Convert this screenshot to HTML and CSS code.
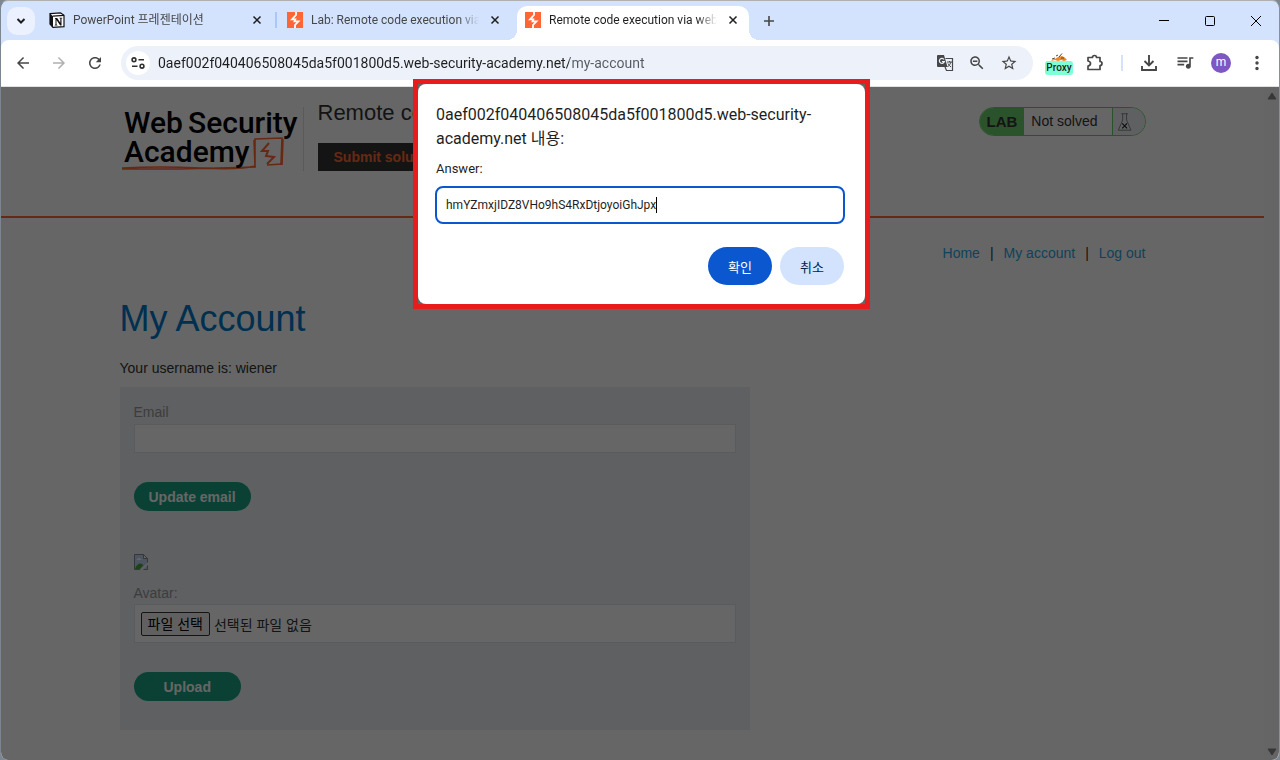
FILE: index.html
```html
<!DOCTYPE html>
<html lang="ko">
<head>
<meta charset="UTF-8">
<meta name="viewport" content="width=device-width, initial-scale=1.0">
<title>Remote code execution via web shell upload</title>
<link rel="stylesheet" href="styles.css">
</head>
<body>
<svg class="defs" aria-hidden="true">
  <symbol id="bolt" viewBox="0 0 16 16">
    <rect width="16" height="16" fill="#ff6633"/>
    <path d="M9 0V3L5 7.300H8.300L7.500 9.300H11.500L8 13V16" fill="none" stroke="#fff" stroke-width="1.800"/>
  </symbol>
  <symbol id="close" viewBox="0 0 10 10">
    <path d="M1.500 1.500L8.500 8.500M8.500 1.500L1.500 8.500" fill="none" stroke="currentColor" stroke-width="1.500"/>
  </symbol>
</svg>

<div class="window">
  <header class="tabstrip">
    <button class="tab-search" aria-label="탭 검색">
      <svg width="10" height="8" viewBox="0 0 10 8"><path d="M1.500 2L5 5.500 8.500 2" fill="none" stroke="#1f1f1f" stroke-width="2"/></svg>
    </button>
    <nav class="tabs">
      <div class="tab">
        <svg width="16" height="16" viewBox="0 0 16 16">
          <path d="M1 1.600L11.500 .8 15 3.300V14.600L4 15.400 1 12Z" fill="#fff" stroke="#111" stroke-width="1.200"/>
          <path d="M1 1.600L4 4.200V15.400L1 12Z" fill="#111"/>
          <path d="M4 4.200L15 3.300" stroke="#111" stroke-width="1.200"/>
          <path d="M6 6H8.200L11.300 10.800V6.600L10.400 6.300V5.700H13.300V6.300L12.500 6.600V13.400H11.200L7.500 8V12.600L8.400 12.900V13.500H5.700V12.900L6.500 12.600V6.900L6 6.600Z" fill="#111"/>
        </svg>
        <a href="#">PowerPoint 프레젠테이션</a>
        <button aria-label="닫기"><svg width="10" height="10"><use href="#close"/></svg></button>
      </div>
      <div class="tab">
        <svg width="16" height="16"><use href="#bolt"/></svg>
        <a href="#">Lab: Remote code execution via web shell upload</a>
        <button aria-label="닫기"><svg width="10" height="10"><use href="#close"/></svg></button>
      </div>
      <div class="tab active">
        <svg width="16" height="16"><use href="#bolt"/></svg>
        <a href="#">Remote code execution via web shell upload</a>
        <button aria-label="닫기"><svg width="10" height="10"><use href="#close"/></svg></button>
      </div>
    </nav>
    <button class="new-tab" aria-label="새 탭">
      <svg width="12" height="12" viewBox="0 0 12 12"><path d="M6 1V11M1 6H11" stroke="#474747" stroke-width="1.600"/></svg>
    </button>
    <div class="window-controls">
      <button aria-label="최소화"><svg width="12" height="12" viewBox="0 0 12 12"><path d="M1 5.500H11" stroke="#000"/></svg></button>
      <button aria-label="최대화"><svg width="12" height="12" viewBox="0 0 12 12"><rect x="1.500" y="1.500" width="9" height="9" rx="1" fill="none" stroke="#000"/></svg></button>
      <button aria-label="창 닫기"><svg width="12" height="12" viewBox="0 0 12 12"><path d="M1 1L11 11M11 1L1 11" stroke="#000"/></svg></button>
    </div>
  </header>

  <div class="toolbar">
    <button aria-label="뒤로"><svg width="18" height="18" viewBox="0 0 24 24"><path d="M20 11H7.830l5.590-5.590L12 4l-8 8 8 8 1.410-1.410L7.830 13H20v-2z"/></svg></button>
    <button class="disabled" aria-label="앞으로"><svg width="18" height="18" viewBox="0 0 24 24"><path d="M4 11h12.170l-5.590-5.590L12 4l8 8-8 8-1.410-1.410L16.170 13H4v-2z"/></svg></button>
    <button aria-label="새로고침"><svg width="18" height="18" viewBox="0 0 24 24"><path d="M17.650 6.350C16.200 4.900 14.210 4 12 4c-4.420 0-7.990 3.580-7.990 8s3.570 8 7.990 8c3.730 0 6.840-2.550 7.730-6h-2.080c-.82 2.330-3.040 4-5.650 4-3.310 0-6-2.690-6-6s2.690-6 6-6c1.660 0 3.140.69 4.220 1.780L13 11h7V4l-2.350 2.350z"/></svg></button>
    <div class="omnibox">
      <button class="site-info" aria-label="사이트 정보 보기">
        <svg width="14" height="12" viewBox="0 0 14 12" fill="none" stroke="#303030" stroke-width="1.600">
          <circle cx="3" cy="2.800" r="1.900"/><path d="M7.500 2.800H13M1 9.200H6.500"/><circle cx="11" cy="9.200" r="1.900"/>
        </svg>
      </button>
      <input type="text" aria-label="주소창" value="0aef002f040406508045da5f001800d5.web-security-academy.net/my-account" spellcheck="false">
      <button aria-label="번역">
        <svg width="18" height="18" viewBox="0 0 18 18">
          <path d="M2 1H8L11.500 13H2Q1 13 1 12V2Q1 1 2 1Z"/>
          <path d="M9.500 4.500H16.500V16.500H10.500L9 13" fill="none" stroke="#474747" stroke-width="1.200"/>
          <path d="M8 5.500A2.500 2.500 0 1 0 8.300 7.500H6" fill="none" stroke="#edf1fa" stroke-width="1.200"/>
          <path d="M11 8H16M13.500 7V8M15 8Q14 11 11.500 13M12 9.500Q13.500 12 15 13" fill="none" stroke="#474747"/>
        </svg>
      </button>
      <button aria-label="확대/축소"><svg width="18" height="18" viewBox="0 0 24 24"><path d="M15.500 14h-.79l-.28-.27C15.410 12.590 16 11.110 16 9.500 16 5.910 13.090 3 9.500 3S3 5.910 3 9.500 5.910 16 9.500 16c1.610 0 3.090-.59 4.230-1.570l.27.28v.79l5 4.990L20.490 19l-4.990-5zm-6 0C7.010 14 5 11.990 5 9.500S7.010 5 9.500 5 14 7.010 14 9.500 11.990 14 9.500 14zM6.500 8.500h6v2h-6z"/></svg></button>
      <button aria-label="북마크 추가"><svg width="18" height="18" viewBox="0 0 24 24"><path d="M22 9.240l-7.190-.62L12 2 9.190 8.630 2 9.240l5.460 4.730L5.820 21 12 17.270 18.180 21l-1.630-7.030L22 9.240zM12 15.400l-3.760 2.270 1-4.280-3.320-2.880 4.380-.38L12 6.100l1.710 4.040 4.380.38-3.320 2.880 1 4.280L12 15.400z"/></svg></button>
    </div>
    <button class="proxy" aria-label="Proxy">
      <svg width="18" height="8" viewBox="0 0 18 8">
        <path d="M1 8Q2 6 5 6L8 4 12 3Q15 4 17 7L14 8 11 7 8 8 5 7Z" fill="#e8892b"/>
        <path d="M6 3L8 2M9 4L12 .5M2 6L5 5M11 5L14 5" stroke="#5b4a36"/>
      </svg>
      <span>Proxy</span>
    </button>
    <button aria-label="확장 프로그램">
      <svg width="18" height="18" viewBox="0 0 18 18"><path d="M2 3.500H6.500A2 2 0 0 1 10.500 3.500H14V7.500A2 2 0 0 1 14 11.500V15.500H2V12Q4.500 11.500 4.500 9.500T2 7Z" fill="none" stroke="#474747" stroke-width="1.700" stroke-linejoin="round"/></svg>
    </button>
    <span class="divider"></span>
    <button aria-label="다운로드"><svg width="18" height="18" viewBox="0 0 18 18"><path d="M9 1V11M4.500 7L9 11.500 13.500 7M2 12V16H16V12" fill="none" stroke="#474747" stroke-width="1.900"/></svg></button>
    <button aria-label="미디어 제어"><svg width="20" height="20" viewBox="0 0 24 24"><path d="M15 5H3v2h12V5zm0 4H3v2h12V9zM3 15h8v-2H3v2zM17 5v8.180c-.31-.11-.65-.18-1-.18-1.660 0-3 1.340-3 3s1.340 3 3 3 3-1.340 3-3V7h3V5h-5z"/></svg></button>
    <button aria-label="프로필"><span class="profile">m</span></button>
    <button aria-label="메뉴"><svg width="16" height="16" viewBox="0 0 16 16"><circle cx="8" cy="2.500" r="1.700"/><circle cx="8" cy="8" r="1.700"/><circle cx="8" cy="13.500" r="1.700"/></svg></button>
  </div>

  <div class="viewport">
    <main class="page">
      <div class="lab-header">
        <div class="container">
          <a class="logo" href="#" aria-label="Web Security Academy">
            <svg width="183" height="70" viewBox="0 0 183 70">
              <path d="M2 64Q40 62 80 64T135 62V35L162 34 161 60 147 61M135 62L134 36M2 65L60 65 136 63M163 35L162 61" fill="none" stroke="#ff6633" stroke-width="1.600"/>
              <path d="M149 39L142 47H148L146 52 154 53 147 60" fill="none" stroke="#ff6633" stroke-width="2"/>
              <text x="4" y="29">Web</text>
              <text x="68" y="29">Security</text>
              <text x="4" y="58">Academy</text>
            </svg>
          </a>
          <div class="lab-title">
            <h2>Remote code execution via web shell upload</h2>
            <button class="submit-solution">Submit solution</button>
          </div>
          <div class="lab-status">
            <strong>LAB</strong>
            <span>Not solved</span>
            <svg width="33" height="27" viewBox="0 0 33 27">
              <path d="M8.500 5.500H15.500M10 5.500V12L5.500 22.500H18.500L14 12V5.500" fill="none" stroke="#888"/>
              <path d="M9.500 15.500L14.500 20.500M14.500 15.500L9.500 20.500" stroke="#222" stroke-width="1.200"/>
            </svg>
          </div>
        </div>
      </div>

      <div class="container account">
        <nav class="account-links">
          <a href="#">Home</a><span>|</span><a href="#">My account</a><span>|</span><a href="#">Log out</a>
        </nav>
        <h1>My Account</h1>
        <p>Your username is: wiener</p>
        <div class="forms">
          <form>
            <label for="email">Email</label>
            <input type="email" id="email">
            <button type="button">Update email</button>
          </form>
          <form>
            <svg class="avatar" width="14" height="16" viewBox="0 0 14 16">
              <path d="M.5 .5H9.500L13.500 4.500V15.500H.5Z" fill="#c3d4f5" stroke="#8a8a8a"/>
              <path d="M9.500 .5V4.500H13.500Z" fill="#fff" stroke="#8a8a8a"/>
              <path d="M2.500 6Q2.500 4.500 4 4.500 5.500 3 6.500 5 7.500 5 7.500 6Z" fill="#fff"/>
              <path d="M1 15Q3 9 7 9.500L9.500 11 6 15Z" fill="#4ba83a"/>
              <path d="M5.500 16L14 8V11L9 16Z" fill="#ebeff2"/>
            </svg>
            <label for="avatar">Avatar:</label>
            <div class="file-field">
              <input type="file" id="avatar">
              <label class="file-button" for="avatar">파일 선택</label>
              <span>선택된 파일 없음</span>
            </div>
            <button type="button" class="wide">Upload</button>
          </form>
        </div>
      </div>
    </main>
    <div class="scrollbar">
      <svg width="10" height="8" viewBox="0 0 10 8"><path d="M5 1L9 7H1Z" stroke-linejoin="round"/></svg>
      <svg width="10" height="8" viewBox="0 0 10 8"><path d="M5 7L9 1H1Z" stroke-linejoin="round"/></svg>
    </div>
  </div>

  <div class="highlight">
    <form class="prompt" role="dialog" aria-labelledby="prompt-title">
      <h2 id="prompt-title">0aef002f040406508045da5f001800d5.web-security-academy.net 내용:</h2>
      <label for="answer">Answer:</label>
      <div class="answer-field">
        <input type="text" id="answer" value="hmYZmxjIDZ8VHo9hS4RxDtjoyoiGhJpx" spellcheck="false">
        <span class="caret"></span>
      </div>
      <div class="prompt-buttons">
        <button type="button" class="ok">확인</button>
        <button type="button">취소</button>
      </div>
    </form>
  </div>
</div>
</body>
</html>
```
FILE: styles.css
```css
* {
  box-sizing: border-box;
}
html, body {
  height: 100%;
}
body {
  margin: 0;
  font-family: Roboto, "Noto Sans CJK KR", sans-serif;
  color: #1f1f1f;
  background-color: #7d8790;
}
button, input {
  font-family: inherit;
  color: inherit;
}
button {
  padding: 0;
  border: none;
  background: none;
  cursor: pointer;
}
a {
  text-decoration: none;
}
.defs {
  display: none;
}
.window {
  position: relative;
  display: flex;
  flex-direction: column;
  height: 100vh;
  overflow: hidden;
  border-left: 1px solid #7b8691;
  border-top: 1px solid #b0b0b0;
  border-right: 1px solid #8a8f96;
  border-radius: 8px;
  background-color: #d3e2fd;
}

/* tabs */
.tabstrip {
  display: flex;
  align-items: center;
  height: 39px;
  padding-left: 6px;
}
.tab-search {
  display: flex;
  align-items: center;
  justify-content: center;
  width: 28px;
  height: 28px;
  border-radius: 10px;
  background-color: #ebf1fe;
}
.tabs {
  display: flex;
  align-self: flex-end;
  gap: 6px;
  margin-left: 6px;
}
.tab {
  position: relative;
  display: flex;
  align-items: center;
  width: 232px;
  height: 34px;
  padding: 0 8px 6px;
  border-radius: 10px 10px 0 0;
  font-size: 12px;
}
.tab:first-child::after {
  content: "";
  position: absolute;
  right: -4px;
  top: 6px;
  width: 2px;
  height: 16px;
  background-color: #a8c7fa;
}
.tab a {
  flex: 1;
  margin: 0 8px;
  overflow: hidden;
  line-height: 20px;
  white-space: nowrap;
  color: #474747;
  -webkit-mask-image: linear-gradient(to right, #000 88%, transparent);
  mask-image: linear-gradient(to right, #000 88%, transparent);
}
.tab button {
  display: flex;
  justify-content: center;
  width: 16px;
}
.tab.active {
  background-color: #fff;
}
.tab.active a {
  color: #1f1f1f;
}
/* curved feet of the active tab */
.tab.active::before, .tab.active::after {
  content: "";
  position: absolute;
  bottom: 0;
  width: 10px;
  height: 10px;
}
.tab.active::before {
  left: -10px;
  background: radial-gradient(circle at 0 0, transparent 10px, #fff 10px);
}
.tab.active::after {
  right: -10px;
  background: radial-gradient(circle at 100% 0, transparent 10px, #fff 10px);
}
.new-tab {
  width: 28px;
  height: 28px;
  margin-left: 6px;
}
.new-tab svg, .window-controls svg {
  display: block;
  margin: 0 auto;
}
.window-controls {
  display: flex;
  margin-left: auto;
}
.window-controls button {
  width: 46px;
  height: 28px;
}

/* toolbar */
.toolbar {
  display: flex;
  align-items: center;
  height: 47px;
  padding: 0 4px;
  border-bottom: 1px solid #dfe1e0;
  border-radius: 8px 8px 0 0;
  background-color: #fff;
}
.toolbar button {
  display: flex;
  flex-shrink: 0;
  align-items: center;
  justify-content: center;
  width: 36px;
  height: 34px;
}
.toolbar svg {
  fill: #474747;
}
.toolbar .disabled svg {
  fill: #b0b0b0;
}
.toolbar .omnibox {
  display: flex;
  flex: 1;
  align-items: center;
  height: 34px;
  margin: 0 8px;
  padding: 0 8px 0 5px;
  border-radius: 17px;
  background-color: #edf1fa;
}
.omnibox button {
  width: 32px;
}
.omnibox .site-info {
  width: 24px;
  height: 24px;
  border-radius: 50%;
  background-color: #fff;
}
.omnibox .site-info svg {
  fill: none;
}
.omnibox input {
  flex: 1;
  min-width: 0;
  margin-left: 8px;
  padding: 0;
  border: none;
  outline: none;
  font-size: 14px;
  /* the path is lighter than the host */
  color: transparent;
  background: linear-gradient(to right, #1f1f1f 411px, #545a63 411px);
  -webkit-background-clip: text;
  background-clip: text;
}
.toolbar .proxy {
  flex-direction: column;
  justify-content: flex-end;
  height: 24px;
}
.proxy span {
  width: 28px;
  height: 14px;
  border-radius: 3px;
  background-color: #7fffd4;
  font-size: 10px;
  font-weight: 500;
  line-height: 14px;
  text-align: center;
}
.divider {
  width: 2px;
  height: 16px;
  margin: 0 8px;
  background-color: #d3e2fd;
}
.profile {
  width: 20px;
  height: 20px;
  border-radius: 50%;
  background-color: #7e57c2;
  color: #fff;
  font-size: 12px;
  line-height: 18px;
  text-align: center;
}

/* web page, dimmed while the prompt is open */
.viewport {
  position: relative;
  display: flex;
  flex: 1;
  min-height: 0;
  overflow: hidden;
  background-color: #fff;
}
.viewport::after {
  content: "";
  position: absolute;
  inset: 0;
  background-color: rgba(0, 0, 0, 0.6);
}
.page {
  flex: 1;
  font-family: "Liberation Sans", Arial, "Noto Sans CJK KR", sans-serif;
  font-size: 14px;
  color: #333;
}
.container {
  width: 82%;
  max-width: 1026px;
  margin: 0 auto;
}
.lab-header {
  height: 131px;
  border-bottom: 2px solid #ff6633;
}
.lab-header .container {
  display: flex;
  align-items: flex-start;
}
.logo {
  height: 64px;
  margin-top: 20px;
  border-right: 1px solid #e0e0e0;
}
.logo svg {
  display: block;
  margin-top: -3px;
  font-family: Roboto, sans-serif;
  font-size: 30px;
  font-weight: 500;
}
.lab-title {
  flex: 1;
  min-width: 0;
  margin: 12px 14px 0;
}
.lab-title h2 {
  margin: 0 0 16px;
  overflow: hidden;
  font-size: 22px;
  font-weight: normal;
  line-height: 28px;
  white-space: nowrap;
}
.submit-solution {
  height: 28px;
  padding: 0 16px;
  background-color: #333;
  color: #ff6633;
  font-size: 14px;
  font-weight: bold;
}
.lab-status {
  display: flex;
  height: 29px;
  margin-top: 20px;
  overflow: hidden;
  border: 1px solid #6dd06d;
  border-radius: 15px;
  line-height: 27px;
}
.lab-status strong {
  padding: 0 7px;
  background-color: #6dd06d;
  font-size: 15px;
}
.lab-status span {
  padding: 0 14px 0 7px;
}
.lab-status svg {
  border-left: 1px solid #6dd06d;
  background-color: #ebeff2;
}
.account-links {
  display: flex;
  justify-content: flex-end;
  gap: 10px;
  padding-top: 26px;
  line-height: 18px;
}
.account-links a {
  color: #29a7df;
}
.account h1 {
  margin: 37px 0 19px;
  color: #0078c8;
  font-size: 36px;
  font-weight: normal;
  line-height: 40px;
}
.account p {
  margin: 0;
  line-height: 20px;
}
.forms {
  max-width: 630px;
  margin-top: 9px;
  padding: 14px 14px 29px;
  background-color: #ebeff2;
}
.forms label {
  display: block;
  color: #999;
  line-height: 22px;
}
.forms input[type="email"] {
  display: block;
  width: 100%;
  height: 29px;
  margin-top: 1px;
  border: 1px solid #e0e4e6;
  background-color: #fff;
}
.forms button {
  height: 29px;
  margin-top: 29px;
  padding: 0 15px;
  border-radius: 15px;
  background-color: #19a283;
  color: #fff;
  font-size: 14px;
  font-weight: bold;
}
.forms .wide {
  padding: 0 30px;
}
.avatar {
  display: block;
  margin: 43px 0 12px;
}
.file-field {
  display: flex;
  align-items: center;
  gap: 4px;
  height: 39px;
  padding: 0 6px;
  border: 1px solid #e0e4e6;
  background-color: #fff;
}
.file-field input {
  position: absolute;
  width: 1px;
  height: 1px;
  opacity: 0;
}
.file-field .file-button {
  padding: 0 6px;
  border: 1px solid #333;
  border-radius: 2px;
  background-color: #efefef;
  color: #000;
}
.scrollbar {
  display: flex;
  flex-direction: column;
  justify-content: space-between;
  align-items: center;
  width: 15px;
  padding: 5px 0 4px;
  background-color: #fcfcfc;
}
.scrollbar svg {
  fill: #8b8b8b;
  stroke: #8b8b8b;
}

/* prompt */
.highlight {
  position: absolute;
  top: 78px;
  left: calc(50% - 227px);
  width: 457px;
  border: 5px solid #e81c1c;
  background-color: #666;
}
.prompt {
  padding: 19px 20px 19px 17px;
  border-radius: 8px;
  background-color: #fff;
}
.prompt h2 {
  margin: 0 0 8px 1px;
  font-size: 16px;
  font-weight: normal;
  line-height: 24px;
}
.prompt label {
  display: block;
  margin-left: 1px;
  font-size: 13px;
  line-height: 20px;
}
.answer-field {
  display: flex;
  align-items: center;
  height: 38px;
  margin: 7px 0 23px;
  padding: 0 9px;
  border: 2px solid #0b57d0;
  border-radius: 8px;
}
.answer-field input {
  field-sizing: content;
  padding: 0;
  border: none;
  outline: none;
  font-size: 12px;
}
.caret {
  width: 1px;
  height: 16px;
  background-color: #000;
}
.prompt-buttons {
  display: flex;
  justify-content: flex-end;
  gap: 8px;
  margin-right: 1px;
}
.prompt-buttons button {
  width: 64px;
  height: 38px;
  border-radius: 19px;
  background-color: #d3e3fd;
  color: #041e49;
  font-size: 13px;
}
.prompt-buttons .ok {
  background-color: #0b57d0;
  color: #fff;
}
```
